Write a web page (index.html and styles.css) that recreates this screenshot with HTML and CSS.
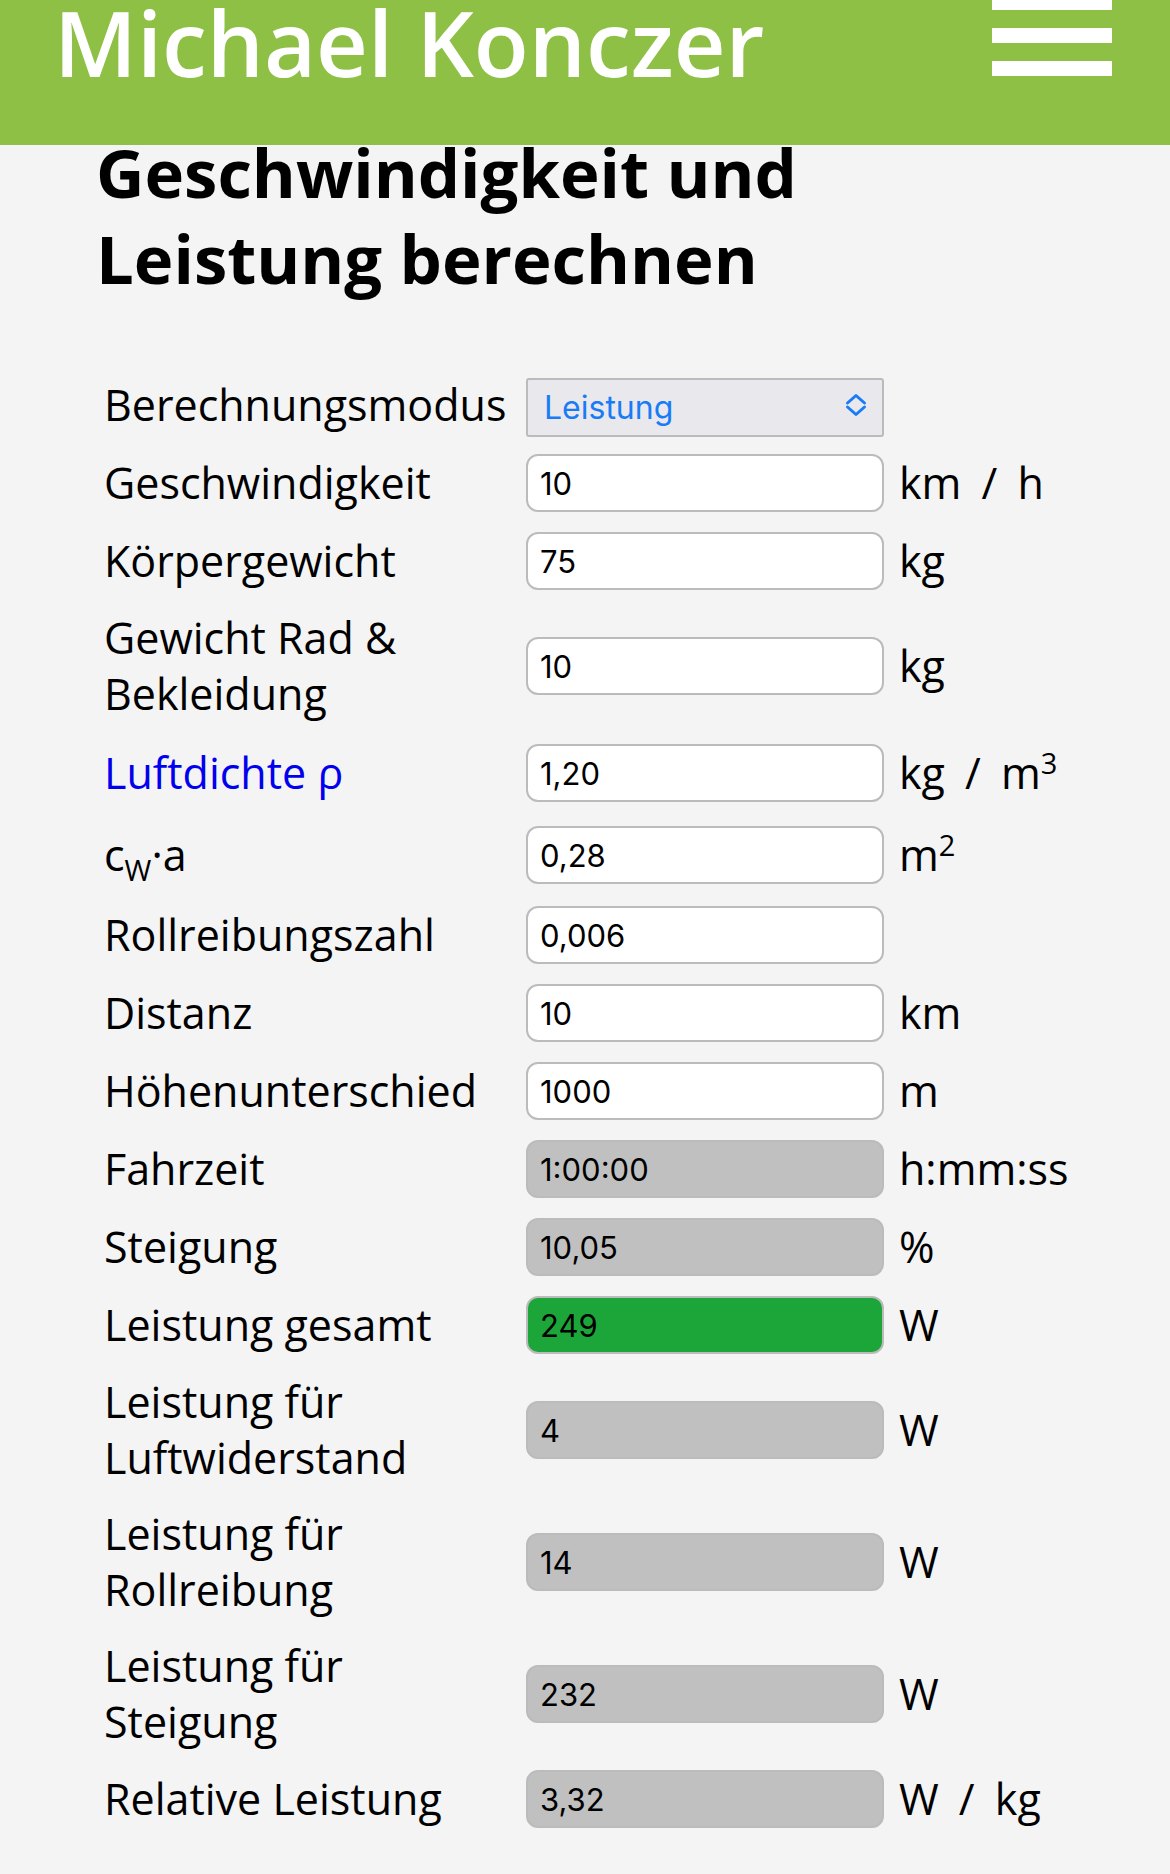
FILE: index.html
```html
<!doctype html>
<html lang="de">

<head>
    <meta charset="utf-8">
    <meta name="viewport" content="width=device-width, initial-scale=1">
    <title>Geschwindigkeit und Leistung berechnen</title>
    <link rel="stylesheet" href="styles.css">
</head>

<body>
    <header class="top-bar">
        <span class="site-title">Michael Konczer</span>
        <div class="menu-toggle">
            <span></span>
            <span></span>
            <span></span>
        </div>
    </header>

    <main class="content">
        <h1>Geschwindigkeit und Leistung berechnen</h1>

        <form class="calc-form">
            <label for="mode">Berechnungsmodus</label>
            <div class="select-wrap">
                <select id="mode">
                    <option>Leistung</option>
                    <option>Geschwindigkeit</option>
                </select>
                <svg class="select-arrow" viewBox="0 0 22 24" width="22" height="24">
                    <path d="M2.5 10 L11 2.5 L19.5 10 M2.5 14 L11 21.5 L19.5 14" fill="none" stroke="#1a7cf5" stroke-width="3" stroke-linecap="round" stroke-linejoin="round"/>
                </svg>
            </div>
            <span class="unit"></span>

            <label for="speed">Geschwindigkeit</label>
            <input type="text" id="speed" value="10">
            <span class="unit">km&nbsp;/&nbsp;h</span>

            <label for="body-weight">Körpergewicht</label>
            <input type="text" id="body-weight" value="75">
            <span class="unit">kg</span>

            <label for="bike-weight">Gewicht Rad &amp; Bekleidung</label>
            <input type="text" id="bike-weight" value="10">
            <span class="unit">kg</span>

            <label for="air-density"><a href="#" class="info-link">Luftdichte ρ</a></label>
            <input type="text" id="air-density" value="1,20">
            <span class="unit tall">kg&nbsp;/&nbsp;m<sup>3</sup></span>

            <label for="drag" class="tall">c<sub>W</sub>·a</label>
            <input type="text" id="drag" value="0,28">
            <span class="unit tall">m<sup>2</sup></span>

            <label for="rolling">Rollreibungszahl</label>
            <input type="text" id="rolling" value="0,006">
            <span class="unit"></span>

            <label for="distance">Distanz</label>
            <input type="text" id="distance" value="10">
            <span class="unit">km</span>

            <label for="climb">Höhenunterschied</label>
            <input type="text" id="climb" value="1000">
            <span class="unit">m</span>

            <label for="time">Fahrzeit</label>
            <input type="text" id="time" class="result" value="1:00:00" readonly>
            <span class="unit">h:mm:ss</span>

            <label for="gradient">Steigung</label>
            <input type="text" id="gradient" class="result" value="10,05" readonly>
            <span class="unit">%</span>

            <label for="power-total">Leistung gesamt</label>
            <input type="text" id="power-total" class="result highlight" value="249" readonly>
            <span class="unit">W</span>

            <label for="power-air">Leistung für Luftwiderstand</label>
            <input type="text" id="power-air" class="result" value="4" readonly>
            <span class="unit">W</span>

            <label for="power-roll">Leistung für Rollreibung</label>
            <input type="text" id="power-roll" class="result" value="14" readonly>
            <span class="unit">W</span>

            <label for="power-climb">Leistung für Steigung</label>
            <input type="text" id="power-climb" class="result" value="232" readonly>
            <span class="unit">W</span>

            <label for="power-rel">Relative Leistung</label>
            <input type="text" id="power-rel" class="result" value="3,32" readonly>
            <span class="unit">W&nbsp;/&nbsp;kg</span>
        </form>
    </main>
</body>

</html>
```

FILE: styles.css
```css
body {
    margin: 0;
    background-color: #f4f4f4;
    color: black;
    font-family: "Open Sans", "Noto Sans", sans-serif;
}

.top-bar {
    display: flex;
    justify-content: space-between;
    align-items: flex-start;
    height: 145px;
    padding: 0 58px 0 54px;
    background-color: #8dc044;
    overflow: hidden;
}

.site-title {
    color: white;
    font-size: 90px;
    font-weight: 600;
    line-height: 84px;
}

.menu-toggle {
    display: flex;
    flex-direction: column;
    gap: 18px;
    margin-top: -5px;
}

.menu-toggle span {
    display: block;
    width: 120px;
    height: 15px;
    background-color: white;
}

.content {
    padding-left: 96px;
}

h1 {
    max-width: 820px;
    margin: -16px 0 74px;
    font-size: 67px;
    line-height: 86px;
    font-weight: bold;
}

.calc-form {
    display: grid;
    grid-template-columns: 422px 358px auto;
    align-items: center;
    row-gap: 20px;
    padding-left: 8px;
    font-size: 43px;
    line-height: 56px;
}

.calc-form label {
    padding-right: 8px;
}

.calc-form .tall {
    line-height: 62px;
}

.info-link {
    color: #0000ee;
    text-decoration: none;
}

sub,
sup {
    font-size: 29px;
    line-height: 0;
}

input[type="text"] {
    box-sizing: border-box;
    width: 358px;
    height: 58px;
    margin: 0;
    padding: 0 12px;
    border: 2px solid #bbbbbb;
    border-radius: 12px;
    background-color: white;
    color: black;
    font-family: Inter, "Noto Sans", sans-serif;
    font-size: 31px;
}

input.result {
    background-color: #c0c0c0;
}

input.highlight {
    background-color: #1ca63a;
}

.select-wrap {
    position: relative;
    height: 59px;
}

select {
    box-sizing: border-box;
    width: 358px;
    height: 59px;
    margin: 0;
    padding: 0 16px;
    border: 2px solid #bbbbbb;
    border-radius: 3px;
    background-color: #e9e9ed;
    color: #1a7cf5;
    font-family: Inter, "Noto Sans", sans-serif;
    font-size: 32px;
    appearance: none;
    -webkit-appearance: none;
}

.select-arrow {
    position: absolute;
    right: 17px;
    top: 18px;
    pointer-events: none;
}

.unit {
    padding-left: 15px;
    white-space: nowrap;
    word-spacing: 9px;
}
```
